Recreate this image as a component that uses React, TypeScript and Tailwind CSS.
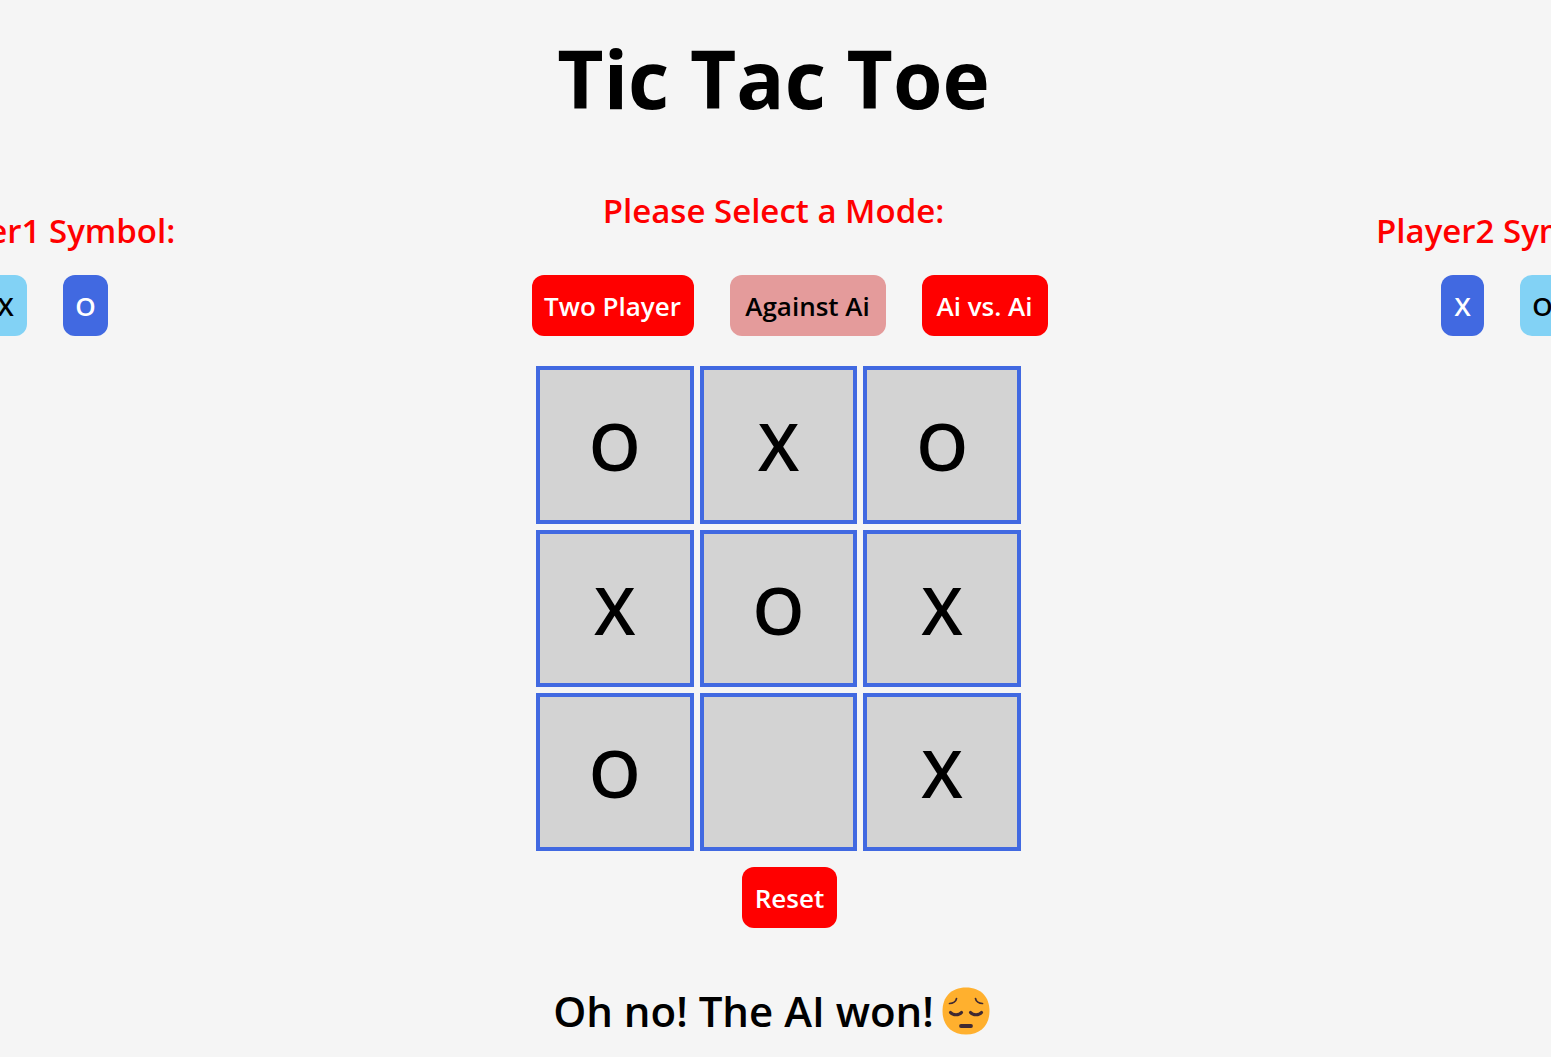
import { useState } from "react";

type Mark = "X" | "O" | "";

const modes = [
  { name: "Two Player", width: "w-[162px]" },
  { name: "Against Ai", width: "w-[156px]" },
  { name: "Ai vs. Ai", width: "w-[126px]" },
];

const finishedGame: Mark[] = ["O", "X", "O", "X", "O", "X", "O", "", "X"];

function SymbolPicker({ player, initial, indent }: { player: number; initial: Mark; indent: string }) {
  const [symbol, setSymbol] = useState<Mark>(initial);
  return (
    <section className="w-[249px] shrink-0 pt-5">
      <h2 className="text-center text-[33px] leading-[48px] font-semibold whitespace-nowrap text-[#ff0000]">
        Player{player} Symbol:
      </h2>
      <div className={`mt-5 flex gap-9 ${indent}`}>
        {(["X", "O"] as Mark[]).map((s) => (
          <button
            key={s}
            type="button"
            aria-pressed={symbol === s}
            onClick={() => setSymbol(s)}
            className={`h-[61px] rounded-xl pt-px text-[26px] font-semibold ${s === "X" ? "w-[43px]" : "w-[45px]"} ${
              symbol === s ? "bg-[#82d2f5] text-black" : "bg-[#4169e1] text-white"
            }`}
          >
            {s}
          </button>
        ))}
      </div>
    </section>
  );
}

function PensiveFace() {
  return (
    <svg viewBox="0 0 48 48" className="size-12" role="img" aria-label="pensive face">
      <path
        d="M24 0.5C39 0.5 47.5 10 47.5 24S39 47.5 24 47.5 0.5 38 0.5 24 9 0.5 24 0.5Z"
        fill="#ffb02e"
      />
      <g fill="none" stroke="#402a32" strokeLinecap="round">
        <path d="M7.5 16.5C11 16.5 14 14.5 14.5 11.5M40.5 16.5C37 16.5 34 14.5 33.5 11.5" strokeWidth="1.7" />
        <path d="M8.5 25.5C11 28.5 17 28.5 19.5 25.5M28.5 25.5C31 28.5 37 28.5 39.5 25.5" strokeWidth="3.2" />
        <path d="M19 39H29" strokeWidth="3.8" />
      </g>
    </svg>
  );
}

export default function App() {
  const [mode, setMode] = useState("Against Ai");
  const [board, setBoard] = useState<Mark[]>(finishedGame);
  const over = board.some(Boolean);

  return (
    <div className="min-h-screen overflow-hidden bg-[#f5f5f5] pt-[18px] font-['Open_Sans',sans-serif] text-black">
      <div className="-mr-[74px] -ml-[78px]">
        <h1 className="text-center text-[80px] leading-[120px] font-bold">Tic Tac Toe</h1>
        <div className="mt-[49px] flex items-start">
          <SymbolPicker player={1} initial="X" indent="pl-[62px]" />

          <main className="flex flex-1 flex-col items-center">
            <h2 className="text-[33px] leading-[48px] font-semibold text-[#ff0000]">Please Select a Mode:</h2>
            <div className="mt-10 flex gap-9 pl-8">
              {modes.map((m) => (
                <button
                  key={m.name}
                  type="button"
                  aria-pressed={mode === m.name}
                  onClick={() => setMode(m.name)}
                  className={`h-[61px] rounded-xl pt-px text-[26px] font-semibold whitespace-nowrap ${m.width} ${
                    mode === m.name ? "bg-[#e49b9b] text-black" : "bg-[#ff0000] text-white"
                  }`}
                >
                  {m.name}
                </button>
              ))}
            </div>

            <div className="mt-[30px] pl-2.5">
              <div className="grid w-[485px] grid-cols-3 gap-1.5">
                {board.map((mark, i) => (
                  <button
                    key={i}
                    type="button"
                    aria-label={`Cell ${i + 1}${mark && `: ${mark}`}`}
                    className="flex aspect-square items-center justify-center border-4 border-[#4169e1] bg-[#d3d3d3] text-[66px] leading-none font-semibold"
                  >
                    {mark}
                  </button>
                ))}
              </div>
            </div>

            <div className="mt-4 pl-8">
              <button
                type="button"
                onClick={() => setBoard(Array<Mark>(9).fill(""))}
                className="h-[61px] w-[95px] rounded-xl bg-[#ff0000] pt-px text-[26px] font-semibold text-white"
              >
                Reset
              </button>
            </div>

            {over && (
              <p className="mt-[51px] flex items-center gap-2 pr-1 text-[42px] leading-[64px] font-semibold whitespace-nowrap">
                Oh no! The AI won!
                <PensiveFace />
              </p>
            )}
          </main>

          <SymbolPicker player={2} initial="O" indent="pl-[65px]" />
        </div>
      </div>
    </div>
  );
}
